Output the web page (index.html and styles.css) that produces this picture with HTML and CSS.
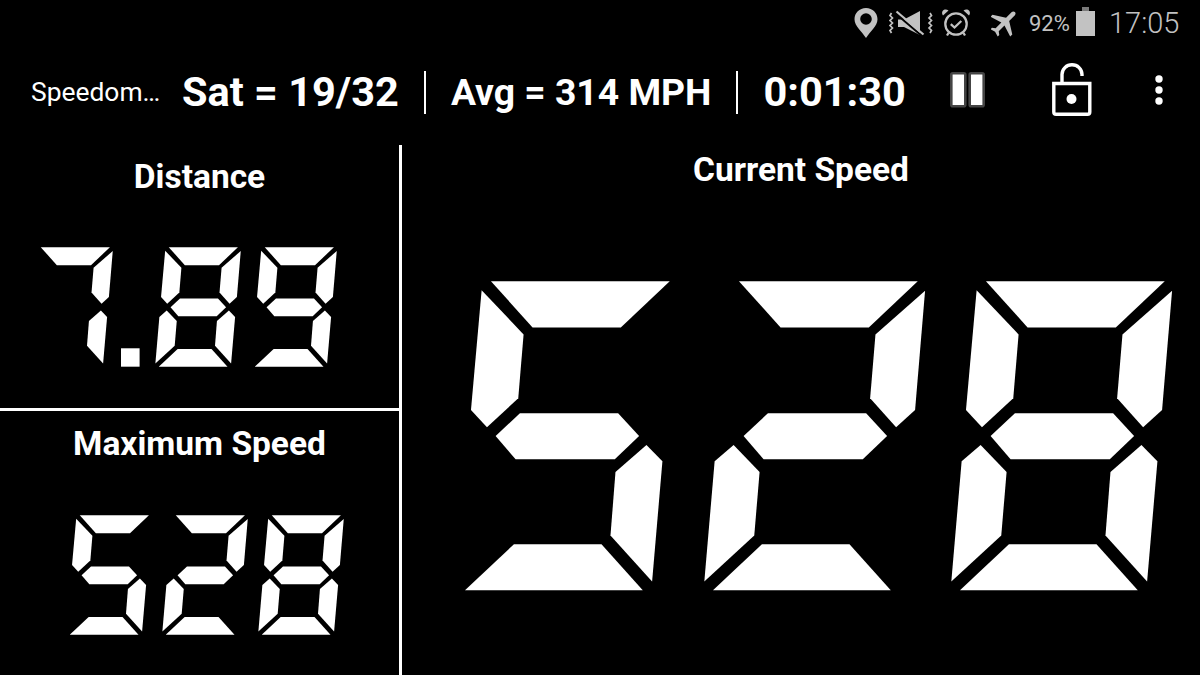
FILE: index.html
```html
<!DOCTYPE html>
<html lang="en">
<head>
<meta charset="utf-8">
<title>Speedometer</title>
<link rel="stylesheet" href="styles.css">
</head>
<body>
<svg class="defs" aria-hidden="true">
  <defs>
    <polygon id="sT" points="138,33 675,33 528,172 263,172"/>
    <polygon id="sUL" points="110,60 236,193 220,385 126,472 78,420"/>
    <polygon id="sUR" points="697,62 667,420 610,472 532,385 548,193"/>
    <polygon id="sM" points="225,430 520,430 583,498 510,568 212,568 152,498"/>
    <polygon id="sLL" points="122,525 200,606 184,797 34,935 65,574"/>
    <polygon id="sLR" points="605,525 653,574 622,935 497,797 512,606"/>
    <polygon id="sB" points="207,823 470,823 594,961 60,961"/>
    <g id="d2"><use href="#sT"/><use href="#sUR"/><use href="#sM"/><use href="#sLL"/><use href="#sB"/></g>
    <g id="d5"><use href="#sT"/><use href="#sUL"/><use href="#sM"/><use href="#sLR"/><use href="#sB"/></g>
    <g id="d7"><use href="#sT"/><use href="#sUR"/><use href="#sLR"/></g>
    <g id="d8"><use href="#sT"/><use href="#sUL"/><use href="#sUR"/><use href="#sM"/><use href="#sLL"/><use href="#sLR"/><use href="#sB"/></g>
    <g id="d9"><use href="#sT"/><use href="#sUL"/><use href="#sUR"/><use href="#sM"/><use href="#sLR"/><use href="#sB"/></g>
  </defs>
</svg>
<div class="app">
  <div class="status">
    <svg class="ico-pin" viewBox="0 0 24 30"><path fill-rule="evenodd" d="M12 0C5.400 0 .5 5 .5 11.200.5 18 8 23.500 12 30c4-6.500 11.500-12 11.500-18.800C23.500 5 18.600 0 12 0zm0 5.200a5.800 5.800 0 1 1 0 11.600 5.800 5.800 0 0 1 0-11.600z"/></svg>
    <svg class="ico-vib" viewBox="0 0 44 26">
      <path class="st" d="M2.500 3L1 5.500 3.500 8 1 10.500 3.500 13 1 15.500 3.500 18 1 20.500 2.500 23"/>
      <path class="st" d="M41 3l1.500 2.500L40 8l2.500 2.500L40 13l2.500 2.500L40 18l2.500 2.500L41 23"/>
      <path d="M9 9.500h6L31 1v24l-16-8H9z"/>
      <path class="cut" d="M6 3l27 23"/>
      <path class="st2" d="M7.500 1.500l27 23"/>
    </svg>
    <svg class="ico-alarm" viewBox="0 0 28 29">
      <circle class="st3" cx="14" cy="16" r="10.700"/>
      <path class="st3" d="M8.800 16.200l3.700 3.300 6.800-6.500"/>
      <path d="M1 7.500l5.500-5c-2-1.600-4.500-1.300-5.700.3-1 1.400-1 3.300.2 4.700zM27 7.500l-5.500-5c2-1.600 4.500-1.300 5.700.3 1 1.400 1 3.300-.2 4.700z"/>
      <path class="st3" d="M6.500 25l-1.500 2.500M21.500 25l1.500 2.500"/>
    </svg>
    <svg class="ico-plane" viewBox="2.500 2.500 19 19"><path transform="rotate(45 12 12)" d="M21 16v-2l-8-5V3.500c0-.83-.67-1.500-1.500-1.500S10 2.670 10 3.500V9l-8 5v2l8-2.500V19l-2 1.500V22l3.500-1 3.500 1v-1.500L13 19v-5.500l8 2.500z"/></svg>
    <span class="pct">92%</span>
    <svg class="ico-bat" viewBox="0 0 19 29"><rect class="nub" x="6" y="0" width="7" height="5"/><rect y="4" width="19" height="25"/></svg>
    <span class="clock">17:05</span>
  </div>
  <div class="toolbar">
    <span class="app-title">Speedom…</span>
    <div class="stats">
      <span class="stat-lg">Sat = 19/32</span>
      <span class="sep"></span>
      <span class="stat-md">Avg = 314 MPH</span>
      <span class="sep"></span>
      <span class="stat-lg">0:01:30</span>
    </div>
    <svg class="ico-pause" viewBox="0 0 35 36">
      <rect class="pz" x="1.300" y="1.300" width="14" height="33" rx="1.500"/>
      <rect class="pz" x="19.700" y="1.300" width="14" height="33" rx="1.500"/>
    </svg>
    <svg class="ico-lock" viewBox="0 0 40 53">
      <path class="lk" d="M1.800 20.500h36v28.500a2.300 2.300 0 0 1-2.300 2.300h-31.400a2.300 2.300 0 0 1-2.300-2.300z"/>
      <path class="lk" d="M10 20V11.500a10 9.700 0 0 1 20 0v1.500"/>
      <circle cx="19.500" cy="36" r="5"/>
    </svg>
    <svg class="ico-more" viewBox="0 0 8 30"><circle cx="4" cy="4" r="3.700"/><circle cx="4" cy="15" r="3.700"/><circle cx="4" cy="26" r="3.700"/></svg>
  </div>
  <div class="main">
    <div class="left">
      <section class="panel distance">
        <h2 class="label">Distance</h2>
        <div class="digits small">
          <svg class="digit" viewBox="0 0 743 990"><use href="#d7"/></svg>
          <svg class="dot" viewBox="0 0 32.400 127.500"><rect x="2" y="105.300" width="18.600" height="18.400"/></svg>
          <svg class="digit" viewBox="0 0 743 990"><use href="#d8"/></svg>
          <svg class="digit" viewBox="0 0 743 990"><use href="#d9"/></svg>
        </div>
      </section>
      <section class="panel maximum">
        <h2 class="label">Maximum Speed</h2>
        <div class="digits small">
          <svg class="digit" viewBox="0 0 743 990"><use href="#d5"/></svg>
          <svg class="digit" viewBox="0 0 743 990"><use href="#d2"/></svg>
          <svg class="digit" viewBox="0 0 743 990"><use href="#d8"/></svg>
        </div>
      </section>
    </div>
    <section class="panel current">
      <h2 class="label">Current Speed</h2>
      <div class="digits big">
        <svg class="digit" viewBox="0 0 743 990"><use href="#d5"/></svg>
        <svg class="digit" viewBox="0 0 743 990"><use href="#d2"/></svg>
        <svg class="digit" viewBox="0 0 743 990"><use href="#d8"/></svg>
      </div>
    </section>
  </div>
</div>
</body>
</html>
```

FILE: styles.css
```css
* { box-sizing: border-box; }
html, body { margin: 0; height: 100%; background: #000; overflow: hidden; }
body { font-family: Roboto, "Liberation Sans", sans-serif; color: #fff; }
.defs { position: absolute; width: 0; height: 0; }
.app { width: 1200px; height: 675px; display: flex; flex-direction: column; }

.status { height: 50px; flex: none; display: flex; align-items: flex-start; color: #c2c2c2; fill: #c2c2c2; padding-left: 854px; }
.status svg { display: block; flex: none; }
.ico-pin { width: 24px; height: 30px; margin-top: 8px; }
.ico-vib { width: 44px; height: 26px; margin: 10px 0 0 11px; }
.st { fill: none; stroke: #c2c2c2; stroke-width: 1.700; }
.st2 { fill: none; stroke: #c2c2c2; stroke-width: 2.200; }
.cut { fill: none; stroke: #000; stroke-width: 2; }
.ico-alarm { width: 28px; height: 29px; margin: 8px 0 0 9px; }
.st3 { fill: none; stroke: #c2c2c2; stroke-width: 2.300; }
.ico-plane { width: 28px; height: 28px; margin: 9px 0 0 21px; }
.pct { font-size: 22px; line-height: 26px; margin: 11px 0 0 10px; width: 47px; white-space: nowrap; }
.ico-bat { width: 19px; height: 29px; margin-top: 7px; }
.nub { fill: #7a7a7a; }
.clock { font-size: 29px; font-weight: 300; line-height: 32px; margin: 7px 0 0 14px; }

.toolbar { height: 95px; flex: none; display: flex; align-items: flex-start; padding-left: 31px; }
.app-title { font-size: 26.400px; line-height: 30px; margin-top: 27px; width: 151px; white-space: nowrap; }
.stats { display: flex; align-items: center; gap: 25px; width: 768px; height: 44px; margin-top: 20px; font-weight: 700; white-space: nowrap; }
.stat-lg { font-size: 41.500px; line-height: 44px; }
.stat-md { font-size: 37.300px; line-height: 44px; }
.sep { width: 2px; height: 43px; flex: none; background: #fff; }
.ico-pause { width: 35px; height: 36px; margin-top: 22px; flex: none; }
.pz { fill: #fff; stroke: #444; stroke-width: 2.600; }
.ico-lock { width: 40px; height: 53px; margin: 13px 0 0 67px; flex: none; fill: #fff; }
.lk { fill: none; stroke: #fff; stroke-width: 3.400; }
.ico-more { width: 8px; height: 30px; margin: 25px 0 0 63px; flex: none; fill: #fff; }

.main { flex: 1; display: flex; min-height: 0; }
.left { width: 402px; flex: none; border-right: 3px solid #fff; display: flex; flex-direction: column; }
.panel { display: flex; flex-direction: column; }
.label { margin: 0; font-size: 33.500px; font-weight: 700; line-height: 40px; text-align: center; white-space: nowrap; }
.distance { height: 266px; border-bottom: 3px solid #fff; padding-top: 12px; }
.maximum { flex: 1; padding-top: 13px; }
.current { flex: 1; padding-top: 5px; }

.digits { display: flex; fill: #fff; }
.digit, .dot { display: block; flex: none; }
.small .digit { width: 95.700px; height: 127.500px; }
.dot { width: 32.400px; height: 127.500px; }
.big .digit { width: 247.400px; height: 330px; }
.distance .digits { padding-left: 22.900px; margin-top: 46px; }
.maximum .digits { padding-left: 62.200px; margin-top: 47px; }
.big { padding-left: 43.300px; margin-top: 80px; }
```
